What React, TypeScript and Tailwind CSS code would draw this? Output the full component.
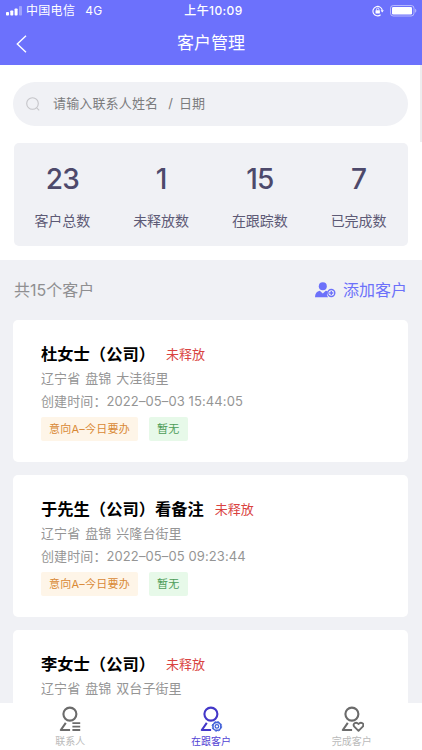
import React, { FC } from 'react';

interface Customer {
  name: string;
  address: string;
  createdAt?: string;
}

const stats = [
  { value: '23', label: '客户总数' },
  { value: '1', label: '未释放数' },
  { value: '15', label: '在跟踪数' },
  { value: '7', label: '已完成数' },
];

const customers: Customer[] = [
  { name: '杜女士（公司）', address: '辽宁省 盘锦 大洼街里', createdAt: '2022–05–03 15:44:05' },
  { name: '于先生（公司）看备注', address: '辽宁省 盘锦 兴隆台街里', createdAt: '2022–05–05 09:23:44' },
  { name: '李女士（公司）', address: '辽宁省 盘锦 双台子街里' },
];

const SignalIcon: FC = () => (
  <svg width="17" height="10" viewBox="0 0 17 10" fill="#fff">
    <rect x="0" y="6" width="3" height="3.5" rx="0.8" />
    <rect x="4.3" y="4.5" width="3" height="5" rx="0.8" />
    <rect x="8.6" y="2.5" width="3" height="7" rx="0.8" />
    <rect x="13" y="0" width="3" height="9.5" rx="0.8" opacity="0.35" />
  </svg>
);

const RotationLockIcon: FC = () => (
  <svg width="12" height="12" viewBox="0 0 12 12" fill="none" stroke="#fff">
    <path d="M8.6 9.8A4.7 4.7 0 1 1 10.3 5.4" strokeWidth="1.1" />
    <path d="M8.6 5.3h3.2l-1.6 2.2z" fill="#fff" stroke="none" />
    <rect x="3.5" y="5.2" width="4.4" height="3.2" rx="0.4" fill="#fff" stroke="none" />
    <path d="M4.5 5.4V4.3a1.2 1.2 0 0 1 2.4 0v1.1" strokeWidth="0.8" />
  </svg>
);

const BatteryIcon: FC = () => (
  <svg width="27" height="12" viewBox="0 0 27 12" fill="none">
    <rect x="0.5" y="0.5" width="23.5" height="10.5" rx="2.8" stroke="#fff" strokeOpacity="0.5" />
    <rect x="2" y="2" width="20" height="7.5" rx="1.3" fill="#fff" />
    <path d="M25.2 3.8v4c1.5-.7 1.5-3.3 0-4z" fill="#fff" fillOpacity="0.55" />
  </svg>
);

const AddUserIcon: FC = () => (
  <svg width="21" height="16" viewBox="0 0 21 16" fill="#6c71fa">
    <circle cx="7.8" cy="4.2" r="4" />
    <path d="M0 15.2c0-3.6 1.8-5.7 4.8-6.4l3 2.7 3-2.7c.8.1 1.4.4 2 .8a4.7 4.7 0 0 0 .3 5.6z" />
    <circle cx="16.3" cy="11" r="3.5" fill="none" stroke="#6c71fa" strokeWidth="1.4" />
    <path d="M16.3 9v4M14.3 11h4" stroke="#6c71fa" strokeWidth="1.3" />
  </svg>
);

// Head and shoulder shared by the three tabs, each adds its own badge
const TabIcon: FC<{ color: string; children: React.ReactNode }> = ({ color, children }) => (
  <svg width="24" height="26" viewBox="0.4 0.2 24 26" fill="none" stroke={color} strokeWidth="2.1">
    <circle cx="12.3" cy="8.3" r="6.5" />
    <path d="M8.2 17L3.2 24.2H12.5" strokeLinejoin="round" />
    {children}
  </svg>
);

const ListBadge: FC = () => <path d="M14.8 17.3H22.6M14.8 20.8H22.6M14.8 24.2H22.6" strokeWidth="1.9" />;

const GearBadge: FC = () => (
  <>
    <circle cx="18.3" cy="20.6" r="4" stroke="#4262d8" strokeWidth="1.6" />
    <circle cx="18.3" cy="20.6" r="4.8" stroke="#4262d8" strokeWidth="1" strokeDasharray="2 1.77" />
    <circle cx="18.3" cy="20.6" r="1.8" stroke="#4262d8" strokeWidth="1.3" />
  </>
);

const HeartBadge: FC = () => (
  <path
    d="M18.9 25l-4.2-4.2c-2.3-2.6 1.6-5.6 4.2-2.6 2.6-3 6.5 0 4.2 2.6z"
    strokeWidth="1.9"
    strokeLinejoin="round"
  />
);

const Header: FC = () => (
  <header className="h-[65px] shrink-0 bg-[#6c71fc] text-white">
    <div className="grid h-[22px] grid-cols-3 items-center pl-1.5 pr-[5px] text-xs leading-none">
      <div className="flex items-center">
        <SignalIcon />
        <span className="ml-[3px] tracking-[0.3px]">中国电信</span>
        <span className="ml-2.5 tracking-[0.3px]">4G</span>
      </div>
      <span className="pl-1 text-center font-medium tracking-[0.4px]">上午10:09</span>
      <div className="flex items-center justify-end gap-1.5">
        <RotationLockIcon />
        <BatteryIcon />
      </div>
    </div>
    <div className="grid h-[43px] grid-cols-3 items-center px-4">
      <svg width="11" height="18" viewBox="0 0 11 18" fill="none" stroke="#fff" strokeWidth="1.4">
        <path d="M10 0.8L1.3 9l8.7 8.2" />
      </svg>
      <h1 className="text-center text-[17px] leading-none">客户管理</h1>
    </div>
  </header>
);

const Summary: FC = () => (
  <section className="h-[195px] shrink-0 bg-white pl-[13px] pr-3.5 pt-[17px]">
    <div className="flex h-11 items-center rounded-full bg-[#f0f1f5] pl-[13px] text-[13px] text-[#7c7c7e]">
      <svg width="14" height="14" viewBox="0 0 14 14" fill="none" stroke="#c5c5c9" strokeWidth="1.1">
        <circle cx="6.5" cy="6.5" r="5.8" />
        <path d="M10.7 10.9l2.5 2.4" />
      </svg>
      <span className="ml-[13px] tracking-[0.15px]">请输入联系人姓名</span>
      <span className="ml-2.5">/</span>
      <span className="ml-[6px]">日期</span>
    </div>
    <div className="ml-px mt-[17px] h-[103px] rounded-[5px] bg-[#f0f1f5] pt-[19px] text-center text-[#4d496b]">
      <div className="-ml-px grid grid-cols-4">
        {stats.map(({ value, label }) => (
          <div key={label} className="flex flex-col">
            <span className="text-[28px] font-medium leading-[34px] tracking-[-0.8px]">{value}</span>
            <span className="mt-[15px] text-sm leading-5 text-[#5d5a75]">{label}</span>
          </div>
        ))}
      </div>
    </div>
  </section>
);

const CustomerCard: FC<Customer> = ({ name, address, createdAt }) => (
  <article className="h-[142px] shrink-0 rounded-[5px] bg-white pl-7 pt-[22px]">
    <div className="mb-px flex h-6 items-center">
      <h2 className="text-[16.3px] font-bold leading-none text-black">{name}</h2>
      <span className="ml-[11px] pt-px text-[13px] leading-none text-[#d9433f]">未释放</span>
    </div>
    <p className="text-[13px] leading-[23px] tracking-[0.08px] text-[#959595] [word-spacing:1.2px]">{address}</p>
    {createdAt && (
      <>
        <p className="text-[13px] leading-[22px] tracking-[0.1px] text-[#959595]">创建时间：{createdAt}</p>
        <div className="mt-[5px] flex gap-[11px] text-[11px] leading-6">
          <span className="rounded-xs bg-[#fef5e8] px-2 tracking-[0.25px] text-[#d98935]">意向A–今日要办</span>
          <span className="rounded-xs bg-[#e7f9e9] px-2 tracking-[0.2px] text-[#4c9c57]">暂无</span>
        </div>
      </>
    )}
  </article>
);

const TabBar: FC = () => (
  <nav className="grid h-[47px] shrink-0 grid-cols-3 bg-white pt-[3px] text-[10px] leading-3 text-[#bababa]">
    <div className="flex flex-col items-center">
      <TabIcon color="#6b6b6b">
        <ListBadge />
      </TabIcon>
      <span className="mt-[3px]">联系人</span>
    </div>
    <div className="flex flex-col items-center text-[#5142d4]">
      <TabIcon color="#4337c8">
        <GearBadge />
      </TabIcon>
      <span className="mt-[3px]">在跟客户</span>
    </div>
    <div className="flex flex-col items-center">
      <TabIcon color="#6b6b6b">
        <HeartBadge />
      </TabIcon>
      <span className="mt-[3px]">完成客户</span>
    </div>
  </nav>
);

const App: FC = (): JSX.Element => {
  return (
    <div className="relative flex h-[750px] w-[422px] flex-col overflow-hidden bg-[#f0f1f5] font-['Inter','Noto_Sans_CJK_SC',sans-serif]">
      <Header />
      <Summary />
      <main className="flex min-h-0 flex-1 flex-col overflow-hidden pl-[13px] pr-3.5">
        <div className="flex h-[60px] shrink-0 items-center justify-between pl-px pr-px text-base leading-none">
          <span className="text-[#8f8f91]">共15个客户</span>
          <button className="flex items-center gap-[7px] text-[#6c71fa]">
            <AddUserIcon />
            <span>添加客户</span>
          </button>
        </div>
        <div className="flex flex-col gap-[13px]">
          {customers.map((customer) => (
            <CustomerCard key={customer.name} {...customer} />
          ))}
        </div>
      </main>
      <TabBar />
      <div className="absolute right-0 top-[65px] h-[77px] w-0.5 bg-[#ededef]" />
    </div>
  );
};

export default App;
